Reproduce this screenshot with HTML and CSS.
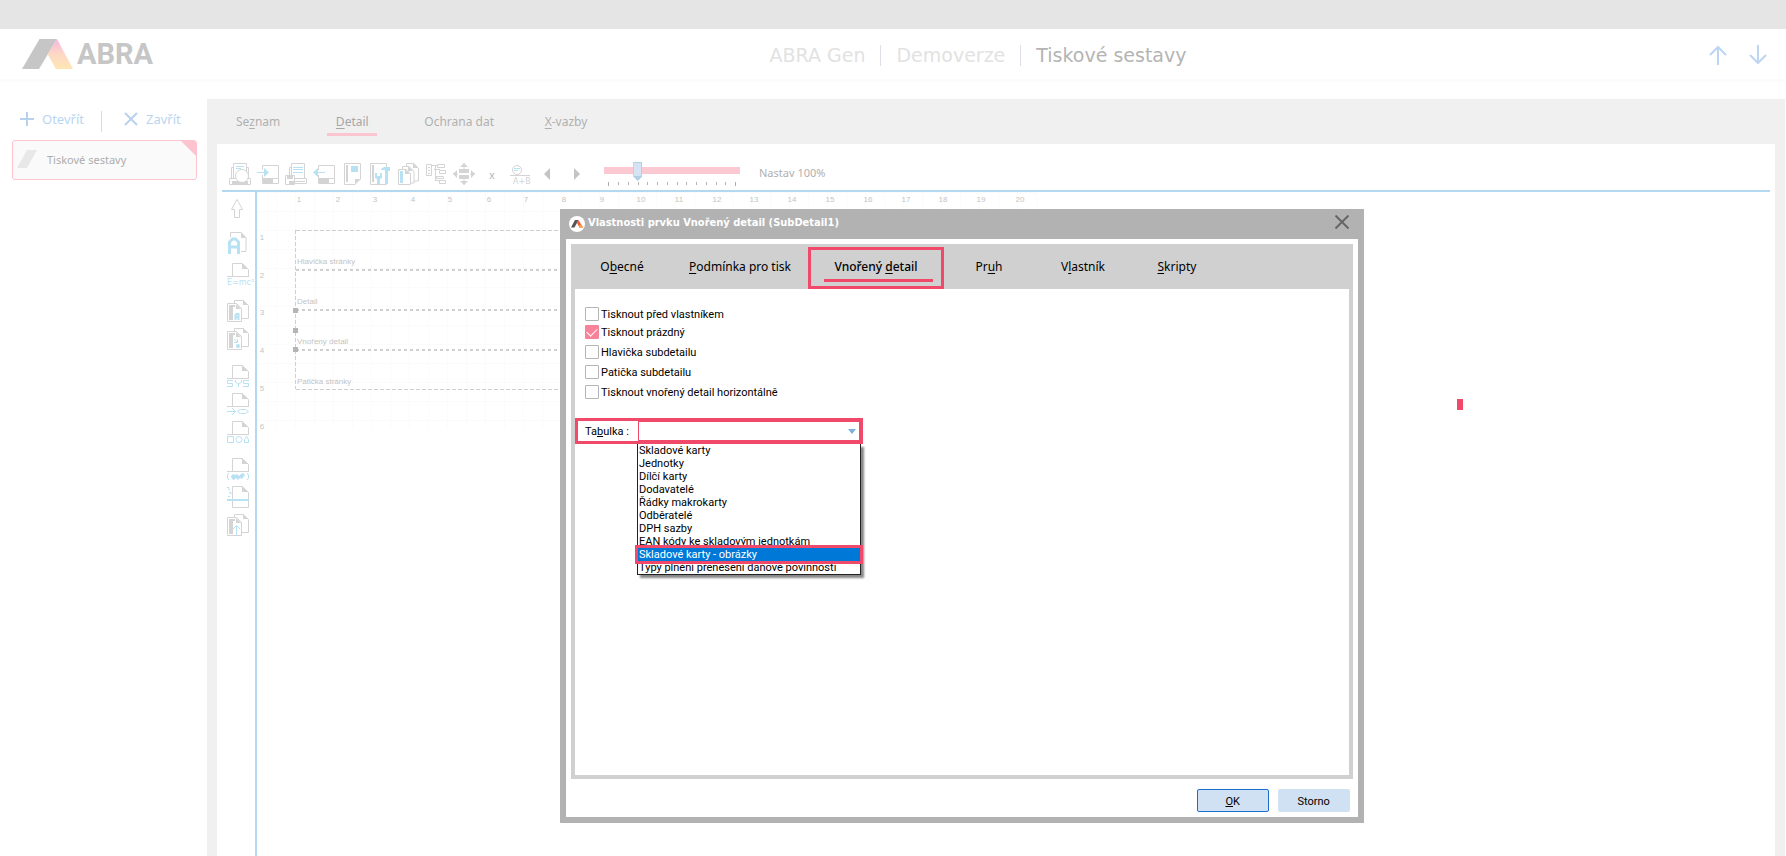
FILE: index.html
```html
<!DOCTYPE html>
<html lang="cs">
<head>
<meta charset="utf-8">
<title>ABRA Gen – Tiskové sestavy</title>
<link rel="stylesheet" href="styles.css">
</head>
<body>
<svg class="defs" aria-hidden="true">
  <defs>
    <linearGradient id="flame" x1="0" y1="0" x2="0" y2="1"><stop offset="0" stop-color="#f9b4e0"/><stop offset=".5" stop-color="#fcd8c4"/><stop offset="1" stop-color="#ffe6b4"/></linearGradient>
    <g id="page"><path d="M5.500 14V.5H15l6.500 6V14" fill="none"/><path class="f" d="M15 0v6h6z"/><path d="M0 13.500H22" /></g>
    <g id="pages"><path d="M7.500 3V.5H16l5.500 5V18.500H15" fill="none"/><path class="f" d="M16 0v5h5z"/><path d="M.5 3.500H9.500l5 5V21.500H.5z" fill="none"/><path class="f" d="M9 4v5h5z"/><path class="f" d="M2 5h6v2H6v13H2z"/></g>
  </defs>
</svg>
<div class="app">
  <div class="topbar"></div>
  <header class="header">
    <div class="brand">
      <svg width="52" height="30" viewBox="0 0 52 30"><path d="M17.500 0H35L17 30H0z" fill="#c6c6c6"/><path d="M35 0L51 30H34L25.500 15z" fill="url(#flame)"/></svg>
      <span>ABRA</span>
    </div>
    <nav class="crumbs"><span>ABRA Gen</span><i></i><span>Demoverze</span><i></i><strong>Tiskové sestavy</strong></nav>
    <div class="arrows">
      <button aria-label="Nahoru"><svg width="18" height="20" viewBox="0 0 18 20"><path d="M9 20V2M1 10l8-8 8 8"/></svg></button>
      <button aria-label="Dolů"><svg width="18" height="20" viewBox="0 0 18 20"><path d="M9 0V18M1 10l8 8 8-8"/></svg></button>
    </div>
  </header>
  <div class="body">
    <aside class="sidebar">
      <div class="actions">
        <button><svg width="14" height="14" viewBox="0 0 14 14"><path d="M7 0V14M0 7H14"/></svg>Otevřít</button>
        <i></i>
        <button><svg width="14" height="14" viewBox="0 0 14 14"><path d="M1 1L13 13M13 1L1 13"/></svg>Zavřít</button>
      </div>
      <a class="agenda" href="#sestavy"><svg width="20" height="18" viewBox="0 0 20 18"><path d="M10 0H20L10 18H0z" fill="#e8e8e8"/></svg>Tiskové sestavy</a>
    </aside>
    <main class="panel">
      <nav class="tabs">
        <button>Se<u>z</u>nam</button><button class="on"><u>D</u>etail</button><button>Ochrana dat</button><button><u>X</u>-vazby</button>
      </nav>
      <section class="sheet">
        <div class="toolbar">
          <button aria-label="Náhled"><svg class="ic" viewBox="0 0 22 22"><path d="M4.500 15V.5H17.500V15M4 4.500H2.500V15M18 4.500H19.500V15"/><path class="b" d="M7 3.500H15M7 5.500H12"/><path d="M.5 15.500H21.500V21.500H.5z"/><path class="f" d="M3 18H19V21H3z"/><circle cx="13" cy="13" r="6.500" fill="#fff"/></svg></button>
          <button aria-label="Import"><svg class="ic" viewBox="0 0 22 22"><path d="M5.500 7V2.500H21.500V20.500H5.500V12M5.500 15.500H21"/><path class="f" d="M5 15h11v5H5z"/><path class="b" d="M0 9.500H9"/><path class="bf" d="M7 5l5 4.500L7 14z"/></svg></button>
          <button aria-label="Tisk do souboru"><svg class="ic" viewBox="0 0 22 22"><path d="M6.500 12V.5H19.500V15M6 4.500H4.500V12M.5 12.500H9.500V21.500H.5zM10 15.500H21.500V20.500H10M10 18.500H20"/><path class="b" d="M8 4.500H18M8 6.500H18M8 9.500H18"/><path class="f" d="M2 13h6v3H2zM4 18h5v3H4z"/></svg></button>
          <button aria-label="Export"><svg class="ic" viewBox="0 0 22 22"><path d="M5.500 7V2.500H21.500V20.500H5.500V12M5.500 15.500H21"/><path class="f" d="M5 15h11v5H5z"/><path class="b" d="M3 9.500H12"/><path class="bf" d="M5 5L0 9.500 5 14z"/></svg></button>
          <button aria-label="Stránka"><svg class="ic" viewBox="0 0 22 22"><path d="M3.500 .5H19.500V16L14 21.500H3.500z"/><path class="f" d="M5 2h2v17H5zM14 16h5l-5 5z"/><path class="bf" d="M10 3h7v6h-7z"/></svg></button>
          <button aria-label="Nastavení"><svg class="ic" viewBox="0 0 22 22"><path d="M1.500 .5H17.500V21.500H1.500z"/><path class="f" d="M3 2h2v17H3z"/><path class="bf" d="M6 10h2v3h3v-3h2v5l-2 1v5H8v-5l-2-1zM12 6l3-2h6v4h-2v13h-3V7h-4z"/></svg></button>
          <button aria-label="Kopie"><svg class="ic" viewBox="0 0 22 22"><path d="M9.500 3V.5H17l4.500 5V18H17M5.500 6V3.500H12l5 5V20H14M1.500 6.500H9l4.500 4V21.500H1.500z"/><path class="f" d="M16 0v5h5zM11 3v5h5zM8 6v5h5z"/><path class="bf" d="M3 8h3v12H3z"/></svg></button>
          <button aria-label="Strom"><svg class="ic" viewBox="0 0 22 22"><path d="M1.500 1.500H6.500V12.500H1.500zM3 4.500H5M3 7.500H5M3 10.500H5M7 2.500H12M9 6.500H15M10.500 3V18M10 17.500H15M12.500 1.500H19.500V4.500H12.500zM14.500 7.500H20.500V10.500H14.500zM11.500 13.500H18.500V15.500H11.500zM14.500 17.500H20.500V20.500H14.500z"/></svg></button>
          <button aria-label="Rozmístit"><svg class="ic" viewBox="0 0 22 22"><path d="M11 0V6M11 16V22M0 11H5M17 11H22"/><path class="f" d="M11 0l4 4H7zM11 22l4-4H7zM0 11l4-4v8zM22 11l-4-4v8zM6 6h10v4H6zM6 12h10v4H6z"/></svg></button>
          <button class="mark" aria-label="Zrušit">x</button>
          <button aria-label="Výraz"><svg class="ic" viewBox="0 0 22 22"><circle cx="8" cy="7" r="4.500"/><path class="b" d="M5 5.500H11M5 7.500H9"/><path d="M1 12.500H21"/><text x="4" y="21">A+B</text></svg></button>
          <button aria-label="Předchozí"><svg class="ic" viewBox="0 0 22 22"><path d="M13 5v12L7 11z" fill="#c4c4c4" stroke="none"/></svg></button>
          <button aria-label="Další"><svg class="ic" viewBox="0 0 22 22"><path d="M9 5v12l6-6z" fill="#c4c4c4" stroke="none"/></svg></button>
          <div class="zoom">
            <input type="range" min="0" max="13" value="3" aria-label="Měřítko">
            <svg width="136" height="5" viewBox="0 0 136 5"><path d="M4.500 1v4M131.500 1v4" stroke="#aaa"/><path d="M14.500 1v3M24.500 1v3M34.500 1v3M43.500 1v3M53.500 1v3M63.500 1v3M73.500 1v3M82.500 1v3M92.500 1v3M102.500 1v3M112.500 1v3M121.500 1v3" stroke="#b4b4b4"/></svg>
          </div>
          <button class="reset">Nastav 100%</button>
        </div>
        <div class="work">
          <div class="tools">
            <div class="group loose">
              <button aria-label="Výběr"><svg class="ic" viewBox="0 0 22 22"><path d="M10 -1.500L15.500 8.500H12.500V16.500H7.500V8.500H4.500z"/></svg></button>
              <button aria-label="Text"><svg class="ic" viewBox="0 0 22 22"><path d="M3.500 5V.5H14l5 5V19.500H14"/><path class="f" d="M14 0v6h5z"/><path d="M2.500 22V10l3-3h3l3 3V22M2.500 15H11.500" stroke="#b8e2f4" stroke-width="3"/></svg></button>
              <button aria-label="Vzorec"><svg class="ic" viewBox="0 0 22 22"><use href="#page"/><text class="bf" x="0" y="22">E=mc²</text></svg></button>
            </div>
            <div class="group">
              <button aria-label="Datové pole"><svg class="ic" viewBox="0 0 22 22"><use href="#pages"/><path class="b" d="M8.500 20V15l1-1h2v6M9 17H11" stroke-width="2"/></svg></button>
              <button aria-label="Odkaz"><svg class="ic" viewBox="0 0 22 22"><use href="#pages"/><path class="b" d="M7 11l3 3M10.500 11v3.500H7"/><circle class="bf" cx="11" cy="18" r="2"/></svg></button>
            </div>
            <div class="group">
              <button aria-label="Systémové pole"><svg class="ic" viewBox="0 0 22 22"><use href="#page"/><path class="b" d="M6 15.500H.5V18.500H5.500V21.500H0M8.500 15V17l3 2 3-2V15M11.500 18.500V22M22 15.500H16.500V18.500H21.500V21.500H16"/></svg></button>
              <button aria-label="Převod"><svg class="ic" viewBox="0 0 22 22"><use href="#page"/><path class="b" d="M0 18.500H8M5 15l3.500 3.500L5 22M10.500 18.500l3-2h5l3 2-3 2h-5z"/></svg></button>
              <button aria-label="Tvary"><svg class="ic" viewBox="0 0 22 22"><use href="#page"/><path class="b" d="M.5 15.500H6.500V21.500H.5zM17.500 21.500V19l2-4 2 4v2.500z"/><circle class="b" cx="12" cy="18.500" r="3"/></svg></button>
            </div>
            <div class="group">
              <button aria-label="Graf"><svg class="ic" viewBox="0 0 22 22"><use href="#page"/><path class="b" d="M2 15l-1.500 2v3L2 22M20 15l1.500 2v3L20 22"/><path class="bf" d="M4 18l2-2 2 1 2-1 2 2 2-2 2-1 2 2-3 4-2-1-2 2-2-2-2 2-2-1z"/></svg></button>
              <button aria-label="Zalomení"><svg class="ic" viewBox="0 0 22 22"><path d="M5.500 .5H15l6.500 6V21.500H5.500z"/><path class="f" d="M15 0v6h6z"/><path class="b" d="M0 1.500h2v3M2 6.500h2v2M1 10.500h2"/><path class="b" d="M0 14H22" stroke-width="2"/></svg></button>
              <button aria-label="Vložit"><svg class="ic" viewBox="0 0 22 22"><use href="#pages"/><path class="b" d="M9.500 21V12M6 15l3.500-3.500L13 15"/></svg></button>
            </div>
          </div>
          <svg class="canvas" role="img" aria-label="Návrh sestavy">
            <defs><pattern id="grid" x="0" y="0" width="19" height="19" patternUnits="userSpaceOnUse"><path d="M.5 0V19M0 .5H19" stroke="#fbfbfb" fill="none"/></pattern></defs>
            <rect width="780" height="236" fill="url(#grid)"/>
            <g class="rule">
              <text x="42" y="10">1</text><text x="81" y="10">2</text><text x="118" y="10">3</text><text x="156" y="10">4</text><text x="193" y="10">5</text><text x="232" y="10">6</text><text x="269" y="10">7</text><text x="307" y="10">8</text><text x="345" y="10">9</text><text x="384" y="10">10</text><text x="422" y="10">11</text><text x="460" y="10">12</text><text x="497" y="10">13</text><text x="535" y="10">14</text><text x="573" y="10">15</text><text x="611" y="10">16</text><text x="649" y="10">17</text><text x="686" y="10">18</text><text x="724" y="10">19</text><text x="763" y="10">20</text>
              <text x="5" y="48">1</text><text x="5" y="86">2</text><text x="5" y="123">3</text><text x="5" y="161">4</text><text x="5" y="199">5</text><text x="5" y="237">6</text>
            </g>
            <g class="bands" fill="none">
              <path d="M38.500 38V197M39 38.500H760M39 197.500H760" stroke="#cfcfcf" stroke-dasharray="4 2"/>
              <path d="M39 78H760M39 118H760M39 158H760" stroke="#cfcfcf" stroke-width="2" stroke-dasharray="3 3"/>
            </g>
            <path d="M36 116h5v5h-5zM36 136h5v5h-5zM36 155h5v5h-5z" fill="#b5b5b5"/>
            <g class="names"><text x="40" y="72">Hlavička stránky</text><text x="40" y="112">Detail</text><text x="40" y="152">Vnořený detail</text><text x="40" y="192">Patička stránky</text></g>
          </svg>
        </div>
      </section>
    </main>
  </div>
  <div class="pin"></div>
  <div class="dialog" role="dialog" aria-labelledby="dlg-title">
    <div class="titlebar">
      <svg width="16" height="16" viewBox="0 0 16 16"><circle cx="8" cy="8" r="8" fill="#fff"/><path d="M6 4h3.500L5.500 11.500H2z" fill="#555"/><path d="M9.500 4l4.500 7.500h-3.500L8 7z" fill="#ee5a3c"/><path d="M12 8.500l2 3h-3.500L9.500 9.500z" fill="#f9a13a"/></svg>
      <h1 id="dlg-title">Vlastnosti prvku Vnořený detail (SubDetail1)</h1>
      <button class="close" aria-label="Zavřít"><svg width="14" height="14" viewBox="0 0 14 14"><path d="M.5 .5L13.500 13.500M13.500 .5L.5 13.500"/></svg></button>
    </div>
    <div class="content">
      <div class="frame">
        <nav class="tabs">
          <button>O<u>b</u>ecné</button><button><u>P</u>odmínka pro tisk</button><button class="on">Vnořený <u>d</u>etail</button><button>Pr<u>u</u>h</button><button>V<u>l</u>astník</button><button><u>S</u>kripty</button>
        </nav>
        <div class="form">
          <div class="checks">
            <label><input type="checkbox">Tisknout před vlastníkem</label>
            <label class="near"><input type="checkbox" checked>Tisknout prázdný</label>
            <label><input type="checkbox">Hlavička subdetailu</label>
            <label><input type="checkbox">Patička subdetailu</label>
            <label><input type="checkbox">Tisknout vnořený detail horizontálně</label>
          </div>
          <div class="field">
            <label for="table">Ta<u>b</u>ulka :</label>
            <div class="combo">
              <select id="table"><option></option></select>
              <svg width="8" height="5" viewBox="0 0 8 5"><path d="M0 0H8L4 5z" fill="#7cb0e0"/></svg>
            </div>
            <ul class="list" role="listbox" aria-label="Tabulka">
              <li role="option">Skladové karty</li>
              <li role="option">Jednotky</li>
              <li role="option">Dílčí karty</li>
              <li role="option">Dodavatelé</li>
              <li role="option">Řádky makrokarty</li>
              <li role="option">Odběratelé</li>
              <li role="option">DPH sazby</li>
              <li role="option">EAN kódy ke skladovým jednotkám</li>
              <li role="option" class="picked" aria-selected="true">Skladové karty - obrázky</li>
              <li role="option">Typy plnění přenesení daňové povinnosti</li>
            </ul>
          </div>
        </div>
      </div>
      <div class="buttons"><button class="ok"><u>O</u>K</button><button>Storno</button></div>
    </div>
  </div>
</div>
</body>
</html>
```
FILE: styles.css
```css
* { box-sizing: border-box; }
body { margin: 0; background: #fff; font-family: "Noto Sans", sans-serif; font-size: 12px; color: #aaa; }
button { font: inherit; color: inherit; background: none; border: 0; padding: 0; }
svg { display: block; }
.defs { position: absolute; width: 0; height: 0; }
.app { position: relative; min-height: 100vh; overflow: hidden; display: flex; flex-direction: column; }
.topbar { height: 29px; background: #e5e5e5; }

.header { display: grid; grid-template-columns: 207px 1fr auto; align-items: center; height: 53px; border-bottom: 3px solid #fcfcfc; }
.brand { display: flex; align-items: center; gap: 3px; padding-left: 22px; font: bold 29px/30px Roboto, sans-serif; color: #c6c6c6; }
.crumbs { display: flex; align-items: center; justify-content: center; gap: 15px; padding: 2px 0 0 40px; font: 19px/24px "DejaVu Sans", sans-serif; color: #e2e2e2; }
.crumbs i { width: 1px; height: 21px; background: #dfdfe8; }
.crumbs strong { font-weight: normal; color: #b4b4b4; }
.arrows { display: flex; gap: 22px; padding: 2px 19px 0 0; }
.arrows path { fill: none; stroke: #bcd6f2; stroke-width: 2; }

.body { flex: 1; display: flex; padding-top: 17px; }
.sidebar { width: 207px; padding: 7px 10px 0 12px; }
.actions { display: flex; align-items: center; height: 26px; padding-left: 8px; font-size: 13px; line-height: 16px; color: #bad5f0; }
.actions button { display: flex; align-items: center; gap: 8px; }
.actions i { width: 1px; height: 21px; margin: 4px 22px 0 17px; background: #dadae2; }
.actions path { stroke: #b8d2ee; stroke-width: 2; }
.agenda { position: relative; display: flex; align-items: center; gap: 10px; height: 40px; margin-top: 8px; padding: 0 0 2px 4px; border: 1px solid #fcc4ce; border-radius: 3px; background: #fafafa; color: #adadad; font-size: 11px; text-decoration: none; overflow: hidden; }
.agenda::after { content: ""; position: absolute; top: 0; right: 0; border-left: 15px solid transparent; border-top: 15px solid #fcc4ce; }

.panel { flex: 1; display: flex; flex-direction: column; margin-right: 1px; padding: 0 10px; background: #f0f0f0; }
.tabs { display: flex; height: 45px; }
.tabs button { position: relative; min-width: 94px; padding: 0 25px; }
.tabs u { text-underline-offset: 2px; }
.panel .tabs { margin-left: -6px; color: #b0b0b0; }
.panel .tabs .on { color: #a6a6a6; }
.tabs .on::after { content: ""; position: absolute; left: 22px; right: 22px; bottom: 8px; height: 3px; background: #fcc6d0; }

.sheet { flex: 1; display: flex; flex-direction: column; padding: 0 5px; background: #fff; }
.toolbar { display: flex; align-items: center; gap: 6px; height: 48px; padding: 14px 0 0 7px; border-bottom: 2px solid #b4d8ef; }
.toolbar button { min-width: 22px; }
.toolbar .mark { font-size: 11px; color: #b8b8b8; }
.ic { width: 22px; height: 22px; fill: none; stroke: #d4d4d4; overflow: visible; }
.ic text { font: 8px "DejaVu Sans", sans-serif; fill: #d4d4d4; stroke: none; }
.ic .f, .f { fill: #d4d4d4; stroke: none; }
.ic .b { stroke: #b8e2f4; }
.ic .bf { fill: #b8e2f4; stroke: none; }
.zoom { width: 136px; height: 24px; margin-left: 11px; }
.zoom input { appearance: none; display: block; width: 100%; height: 19px; margin: 0; background: linear-gradient(#fcc8d2, #fcc8d2) 0 5px / 100% 7px no-repeat; }
.zoom input::-webkit-slider-thumb { appearance: none; width: 9px; height: 19px; background: #d4e4f4; border: 1px solid #b2cfe4; border-bottom-width: 5px; clip-path: polygon(0 0, 100% 0, 100% 75%, 50% 100%, 0 75%); }
.toolbar .reset { margin-left: 13px; padding-bottom: 3px; font-size: 11px; color: #b0b0b0; }

.work { flex: 1; display: flex; }
.tools { display: flex; flex-direction: column; gap: 15px; width: 35px; padding: 9px 0 0 5px; border-right: 2px solid #b4d8ef; }
.group { display: flex; flex-direction: column; gap: 6px; }
.group.loose { gap: 9px; }
.group button { width: 22px; height: 22px; }
.canvas { flex: 1; height: 250px; font: 8px "Liberation Sans", sans-serif; fill: #c4c4c4; }
.rule text { text-anchor: middle; }

.pin { position: absolute; left: 1457px; top: 399px; width: 6px; height: 11px; background: #f0496a; }

.dialog { position: absolute; left: 560px; top: 209px; width: 45%; min-height: 614px; display: flex; flex-direction: column; padding: 0 6px 6px; background: #b2b2b2; color: #000; }
.titlebar { display: flex; align-items: center; gap: 3px; height: 30px; padding: 0 9px 0 3px; color: #fff; }
.titlebar h1 { flex: 1; margin: 0; padding-bottom: 2px; font: bold 11px/16px "DejaVu Sans Condensed", "DejaVu Sans", sans-serif; }
.close { padding-bottom: 4px; }
.close path { stroke: #666; stroke-width: 2; }
.content { flex: 1; display: flex; flex-direction: column; padding: 5px; background: #fff; }
.frame { flex: 1; display: flex; flex-direction: column; padding: 0 4px 4px; background: #d0d0d0; }
.dialog .tabs button { padding: 0 20px; }
.dialog .tabs .on { width: 136px; margin: 3px -2px 0 -3px; padding: 0 0 3px; border: 3px solid #f0496a; font-weight: 500; }
.dialog .tabs .on::after { left: 13px; right: 8px; bottom: 4px; background: #f0496a; }
.form { flex: 1; background: #fff; font-family: Roboto, sans-serif; font-size: 11px; line-height: 13px; }
.checks { display: flex; flex-direction: column; gap: 6px; padding: 18px 10px 0; }
.checks label { display: flex; align-items: center; gap: 2px; height: 14px; }
.checks .near { margin-top: -2px; }
.checks input { appearance: none; width: 14px; height: 14px; margin: 0; border: 1px solid #b4b4b4; border-radius: 1px; background: #fff; }
.checks input:checked { display: grid; place-items: center; border-color: #f7829a; background: #f7829a; }
.checks input:checked::after { content: ""; width: 9px; height: 5px; border: solid #fff; border-width: 0 0 1px 1px; transform: translateY(-1px) rotate(-45deg); }
.field { position: relative; display: flex; align-items: center; width: 288px; height: 26px; margin-top: 19px; padding-left: 7px; border: 3px solid #f0496a; }
.field label { width: 53px; }
.combo { position: relative; flex: 1; height: 20px; }
.combo select { appearance: none; display: block; width: 100%; height: 20px; border: 1px solid #f0496a; border-radius: 0; background: #fff; }
.combo svg { position: absolute; right: 4px; top: 8px; }
.list { position: absolute; left: 59px; top: 23px; width: 224px; margin: 0; list-style: none; padding: 0; border: 1px solid #222; border-top: 0; background: #fff; box-shadow: 3px 3px 2px #888; }
.list li { height: 13px; padding-left: 1px; white-space: nowrap; }
.list .picked { position: relative; background: #0078d7; color: #fff; outline: 3px solid #f0496a; }
.buttons { display: flex; justify-content: flex-end; gap: 9px; padding: 10px 3px 0; font-family: Roboto, sans-serif; font-size: 11px; }
.buttons button { width: 72px; height: 23px; padding-top: 2px; border-radius: 2px; background: #d0e1f3; }
.buttons .ok { border: 1px solid #1b6fce; }
```
